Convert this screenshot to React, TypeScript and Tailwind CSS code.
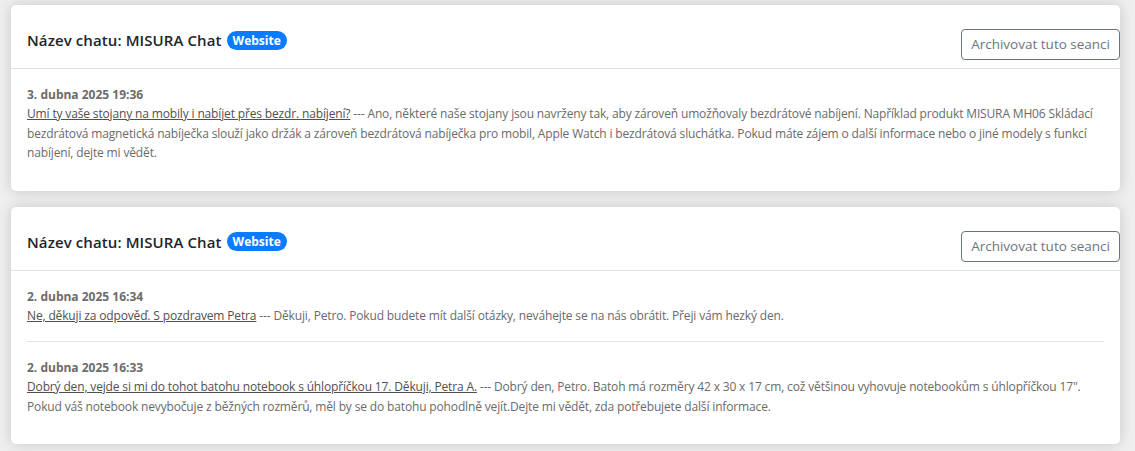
import React from "react";

type Message = {
  date: string;
  question: string;
  answer: string;
};

type Session = {
  name: string;
  source: string;
  messages: Message[];
};

const sessions: Session[] = [
  {
    name: "MISURA Chat",
    source: "Website",
    messages: [
      {
        date: "3. dubna 2025 19:36",
        question: "Umí ty vaše stojany na mobily i nabíjet přes bezdr. nabíjení?",
        answer:
          "Ano, některé naše stojany jsou navrženy tak, aby zároveň umožňovaly bezdrátové nabíjení. Například produkt MISURA MH06 Skládací bezdrátová magnetická nabíječka slouží jako držák a zároveň bezdrátová nabíječka pro mobil, Apple Watch i bezdrátová sluchátka. Pokud máte zájem o další informace nebo o jiné modely s funkcí nabíjení, dejte mi vědět.",
      },
    ],
  },
  {
    name: "MISURA Chat",
    source: "Website",
    messages: [
      {
        date: "2. dubna 2025 16:34",
        question: "Ne, děkuji za odpověď. S pozdravem Petra",
        answer:
          "Děkuji, Petro. Pokud budete mít další otázky, neváhejte se na nás obrátit. Přeji vám hezký den.",
      },
      {
        date: "2. dubna 2025 16:33",
        question: "Dobrý den, vejde si mi do tohot batohu notebook s úhlopříčkou 17. Děkuji, Petra A.",
        answer:
          "Dobrý den, Petro. Batoh má rozměry 42 x 30 x 17 cm, což většinou vyhovuje notebookům s úhlopříčkou 17\". Pokud váš notebook nevybočuje z běžných rozměrů, měl by se do batohu pohodlně vejít.Dejte mi vědět, zda potřebujete další informace.",
      },
    ],
  },
];

function SessionCard({ session }: { session: Session }) {
  return (
    <div className="rounded-[5px] bg-white shadow-[0_0_14px_rgba(0,0,0,0.17)]">
      <div className="flex items-start justify-between border-b border-[#dee2e6] pb-[8px] pl-4 pt-6">
        <div className="flex items-center gap-[5px] leading-[22px]">
          <span className="text-[15px] font-semibold tracking-[0.1px] text-[#212529]">
            Název chatu: {session.name}
          </span>
          <span className="rounded-full bg-[#0d7bff] px-[6px] text-[12px] font-bold leading-[19px] text-white">
            {session.source}
          </span>
        </div>
        <button className="h-[31px] rounded-[4px] border border-[#6c757d] px-[9px] text-[13.5px] text-[#6c757d]">
          Archivovat tuto seanci
        </button>
      </div>
      <div className="px-4 pb-3">
        {session.messages.map((message, index) => (
          <div
            key={message.date}
            className={index > 0 ? "border-t border-[#dee2e6] py-4" : "py-4"}
          >
            <p className="text-[12px] font-bold leading-[19px] text-[#6c6c6c]">{message.date}</p>
            <p className="text-[12px] leading-[19.5px] tracking-[-0.15px] text-[#6a6a6a]">
              <span className="text-[#505050] underline">{message.question}</span> --- {message.answer}
            </p>
          </div>
        ))}
      </div>
    </div>
  );
}

export default function App() {
  return (
    <div
      className="min-h-[451px] bg-[#efefef] pb-4 pl-[11px] pr-[15px] pt-[5px]"
      style={{ fontFamily: '"Segoe UI", "Open Sans", "Noto Sans", sans-serif' }}
    >
      <div className="flex flex-col gap-4">
        {sessions.map((session, index) => (
          <SessionCard key={index} session={session} />
        ))}
      </div>
    </div>
  );
}
